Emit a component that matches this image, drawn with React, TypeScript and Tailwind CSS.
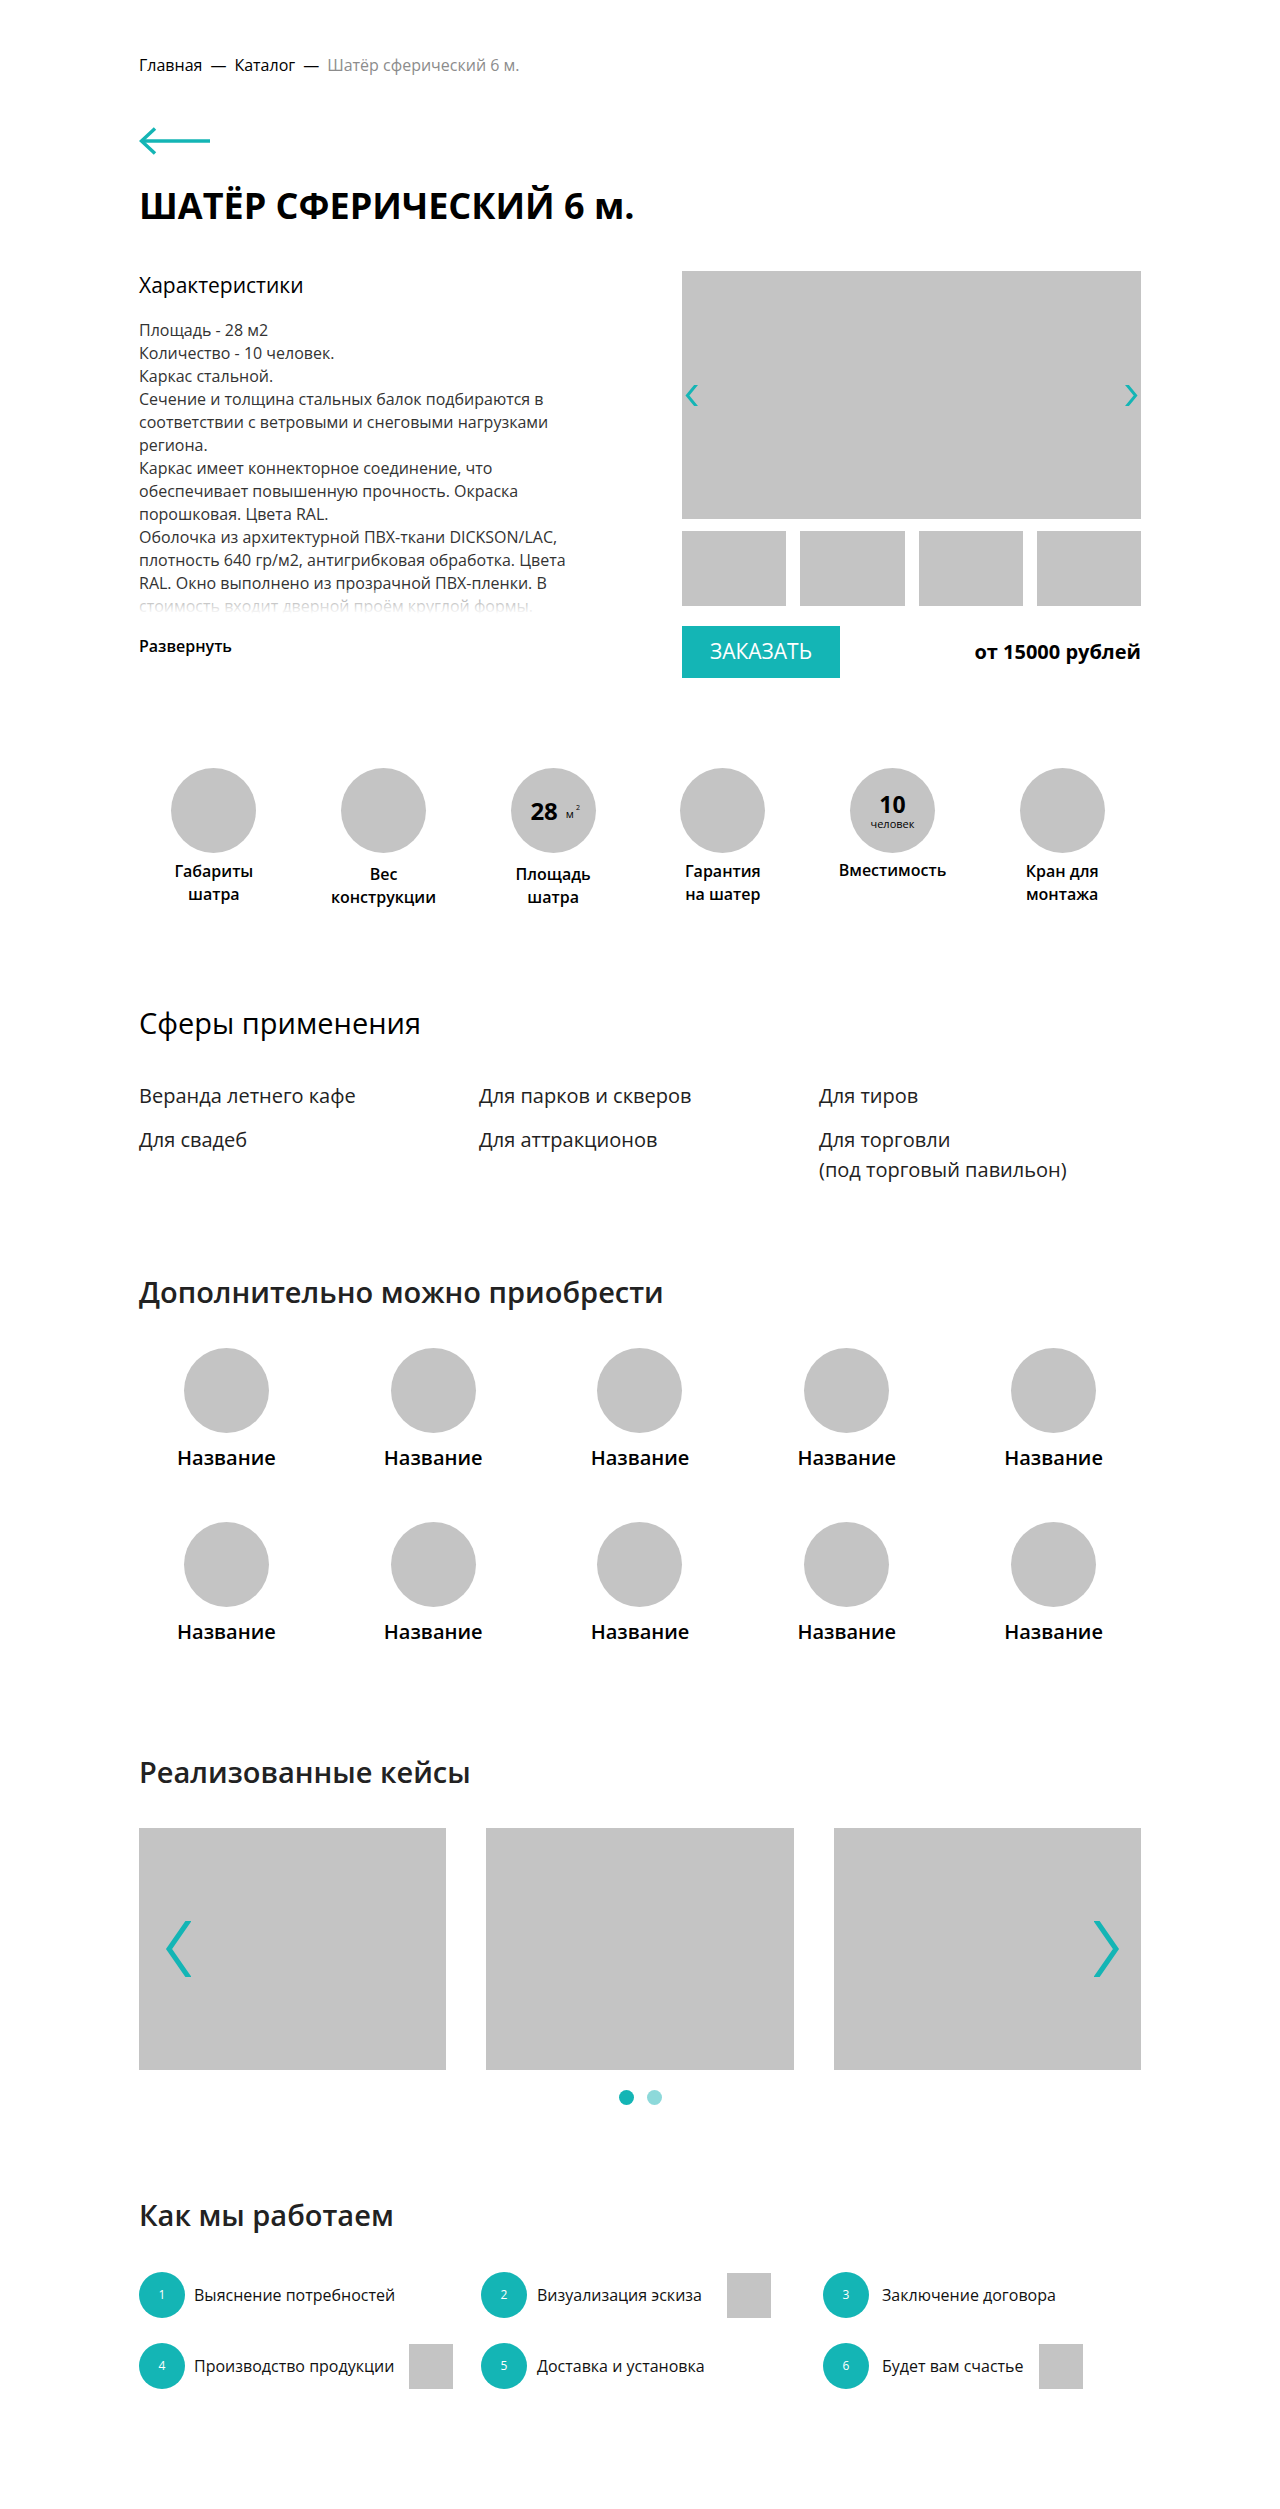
import React from "react";

const bodyLines = [
  "Площадь - 28 м2",
  "Количество - 10 человек.",
  "Каркас стальной.",
  "Сечение и толщина стальных балок подбираются в",
  "соответствии с ветровыми и снеговыми нагрузками",
  "региона.",
  "Каркас имеет коннекторное соединение, что",
  "обеспечивает повышенную прочность. Окраска",
  "порошковая. Цвета RAL.",
  "Оболочка из архитектурной ПВХ-ткани DICKSON/LAC,",
  "плотность 640 гр/м2, антигрибковая обработка. Цвета",
  "RAL. Окно выполнено из прозрачной ПВХ-пленки. В",
  "стоимость входит дверной проём круглой формы.",
  "Крепление к основанию анкерами.",
];

const features = [
  { label: ["Габариты", "шатра"], mt: "mt-[7px]" },
  { label: ["Вес", "конструкции"], mt: "mt-[10px]" },
  { label: ["Площадь", "шатра"], mt: "mt-[10px]", area: true },
  { label: ["Гарантия", "на шатер"], mt: "mt-[7px]" },
  { label: ["Вместимость"], mt: "mt-[6px]", people: true },
  { label: ["Кран для", "монтажа"], mt: "mt-[7px]" },
];

const spheres = [
  ["Веранда летнего кафе"],
  ["Для парков и скверов"],
  ["Для тиров"],
  ["Для свадеб"],
  ["Для аттракционов"],
  ["Для торговли", "(под торговый павильон)"],
];

const steps = [
  { n: 1, text: "Выяснение потребностей", ml: "ml-[9px]" },
  { n: 2, text: "Визуализация эскиза", ml: "ml-[10px]", square: "ml-[25px]" },
  { n: 3, text: "Заключение договора", ml: "ml-[13px]" },
  { n: 4, text: "Производство продукции", ml: "ml-[9px]", square: "ml-[15px]" },
  { n: 5, text: "Доставка и установка", ml: "ml-[10px]" },
  { n: 6, text: "Будет вам счастье", ml: "ml-[13px]", square: "ml-[15px]" },
];

// thin teal slider arrow, ends cut flat by the viewBox
const Chevron = ({ dir, w, h, stroke }: { dir: "l" | "r"; w: number; h: number; stroke: number }) => {
  const far = w - stroke / 2;
  const near = stroke * 0.8;
  const pts =
    dir === "l"
      ? `${far + 2},-3 ${near},${h / 2} ${far + 2},${h + 3}`
      : `${w - far - 2},-3 ${w - near},${h / 2} ${w - far - 2},${h + 3}`;
  return (
    <svg width={w} height={h} viewBox={`0 0 ${w} ${h}`} fill="none">
      <polyline points={pts} stroke="#14b5b5" strokeWidth={stroke} />
    </svg>
  );
};

const Heading = ({ children, className = "" }: { children: React.ReactNode; className?: string }) => (
  <h2 className={`text-[29px] leading-[38px] text-[#222] font-semibold ${className}`}>{children}</h2>
);

export default function App() {
  return (
    <div
      className="min-h-screen bg-white text-black pt-[53px] pb-[120px]"
      style={{ fontFamily: '"Open Sans", "Noto Sans", sans-serif' }}
    >
      <div className="w-[1002px] mx-auto">
        {/* breadcrumbs */}
        <div className="flex items-center gap-[8px] text-[16px] leading-[24px]">
          <span>Главная</span>
          <span>—</span>
          <span>Каталог</span>
          <span>—</span>
          <span className="text-[#8c8c8c]">Шатёр сферический 6 м.</span>
        </div>

        {/* back */}
        <div className="mt-[50px] h-[28px]">
          <svg width="71" height="28" viewBox="0 0 71 28" fill="none">
            <line x1="2" y1="14" x2="71" y2="14" stroke="#14b5b5" strokeWidth="3.5" />
            <polyline points="16,1.5 2.5,14 16,26.5" stroke="#14b5b5" strokeWidth="3.5" fill="none" />
          </svg>
        </div>

        <h1 className="mt-[29px] text-[36px] leading-[44px] font-bold">ШАТЁР СФЕРИЧЕСКИЙ 6 м.</h1>

        {/* product */}
        <div className="mt-[43px] flex justify-between">
          <div className="w-[450px]">
            <h3 className="text-[21px] leading-[28px] font-medium">Характеристики</h3>
            <div className="relative mt-[20px] h-[295px] overflow-hidden text-[16px] leading-[23px] text-[#333]">
              {bodyLines.map((l) => (
                <div key={l} className="whitespace-nowrap">
                  {l}
                </div>
              ))}
              <div className="absolute left-0 right-0 bottom-0 h-[24px] bg-gradient-to-b from-white/40 to-white" />
            </div>
            <button className="mt-[20px] text-[16px] leading-[24px] font-semibold">Развернуть</button>
          </div>

          <div className="w-[459px]">
            <div className="h-[248px] bg-[#c4c4c4] flex items-center justify-between px-[3px]">
              <Chevron dir="l" w={13} h={21} stroke={3} />
              <Chevron dir="r" w={13} h={21} stroke={3} />
            </div>
            <div className="mt-[12px] grid grid-cols-4 gap-[14px]">
              {[0, 1, 2, 3].map((i) => (
                <div key={i} className="h-[75px] bg-[#c4c4c4]" />
              ))}
            </div>
            <div className="mt-[20px] flex items-center justify-between">
              <button className="w-[158px] h-[52px] bg-[#14b5b5] text-white text-[21px]">ЗАКАЗАТЬ</button>
              <span className="text-[20px] font-bold">от 15000 рублей</span>
            </div>
          </div>
        </div>

        {/* features */}
        <div className="mt-[90px] -ml-[10px] w-[1018px] grid grid-cols-6">
          {features.map((f, i) => (
            <div key={i} className="flex flex-col items-center">
              <div className="w-[85px] h-[85px] rounded-full bg-[#c4c4c4] flex flex-col items-center justify-center">
                {f.area && (
                  <div className="flex items-start ml-[4px]">
                    <span className="text-[24px] leading-[30px] font-bold">28</span>
                    <span className="text-[11px] leading-[11px] ml-[8px] mt-[12px]">м</span>
                    <span className="text-[7px] leading-[7px] ml-[2px] mt-[8px]">2</span>
                  </div>
                )}
                {f.people && (
                  <>
                    <span className="text-[23px] leading-[26px] font-bold">10</span>
                    <span className="text-[11px] leading-[14px]">человек</span>
                  </>
                )}
              </div>
              <div className={`${f.mt} text-center text-[16px] leading-[23px] font-semibold`}>
                {f.label.map((l) => (
                  <div key={l}>{l}</div>
                ))}
              </div>
            </div>
          ))}
        </div>

        {/* spheres */}
        <h2 className="mt-[95px] text-[29px] leading-[38px] font-normal">Сферы применения</h2>
        <div className="mt-[39px] grid grid-cols-[340px_340px_1fr] gap-y-[14px] text-[20px] leading-[30px] text-[#222]">
          {spheres.map((s) => (
            <div key={s[0]}>
              {s.map((l) => (
                <div key={l}>{l}</div>
              ))}
            </div>
          ))}
        </div>

        {/* extras */}
        <Heading className="mt-[88px]">Дополнительно можно приобрести</Heading>
        <div className="mt-[37px] -ml-[16px] w-[1034px] grid grid-cols-5 gap-y-[50px]">
          {Array.from({ length: 10 }).map((_, i) => (
            <div key={i} className="flex flex-col items-center">
              <div className="w-[85px] h-[85px] rounded-full bg-[#c4c4c4]" />
              <div className="mt-[11px] text-[20px] leading-[28px] font-semibold">Название</div>
            </div>
          ))}
        </div>

        {/* cases */}
        <Heading className="mt-[107px]">Реализованные кейсы</Heading>
        <div className="mt-[37px] grid grid-cols-3 gap-[40px]">
          <div className="h-[242px] bg-[#c4c4c4] flex items-center pl-[26px]">
            <Chevron dir="l" w={26} h={56} stroke={5} />
          </div>
          <div className="h-[242px] bg-[#c4c4c4]" />
          <div className="h-[242px] bg-[#c4c4c4] flex items-center justify-end pr-[21px]">
            <Chevron dir="r" w={26} h={56} stroke={5} />
          </div>
        </div>
        <div className="mt-[20px] flex justify-center gap-[13px]">
          <span className="w-[15px] h-[15px] rounded-full bg-[#14b5b5]" />
          <span className="w-[15px] h-[15px] rounded-full bg-[#8dd9da]" />
        </div>

        {/* how we work */}
        <Heading className="mt-[91px]">Как мы работаем</Heading>
        <div className="mt-[38px] grid grid-cols-[342px_342px_1fr] gap-y-[25px]">
          {steps.map((s) => (
            <div key={s.n} className="flex items-center">
              <div className="w-[46px] h-[46px] shrink-0 rounded-full bg-[#14b5b5] text-white text-[12px] flex items-center justify-center">
                {s.n}
              </div>
              <span className={`${s.ml} text-[16px] leading-[22px] text-[#111]`}>{s.text}</span>
              {s.square && <div className={`${s.square} w-[44px] h-[45px] bg-[#c4c4c4]`} />}
            </div>
          ))}
        </div>
      </div>
    </div>
  );
}
